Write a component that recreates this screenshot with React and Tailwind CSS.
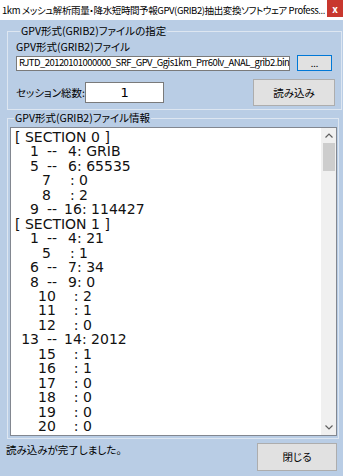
import React from "react";

const rows = [
  { k: "h", v: "[ SECTION 0 ]" },
  { k: "r", a: "1", b: "4", v: "GRIB" },
  { k: "r", a: "5", b: "6", v: "65535" },
  { k: "s", a: "7", v: "0" },
  { k: "s", a: "8", v: "2" },
  { k: "r", a: "9", b: "16", v: "114427" },
  { k: "h", v: "[ SECTION 1 ]" },
  { k: "r", a: "1", b: "4", v: "21" },
  { k: "s", a: "5", v: "1" },
  { k: "r", a: "6", b: "7", v: "34" },
  { k: "r", a: "8", b: "9", v: "0" },
  { k: "s", a: "10", v: "2" },
  { k: "s", a: "11", v: "1" },
  { k: "s", a: "12", v: "0" },
  { k: "r", a: "13", b: "14", v: "2012" },
  { k: "s", a: "15", v: "1" },
  { k: "s", a: "16", v: "1" },
  { k: "s", a: "17", v: "0" },
  { k: "s", a: "18", v: "0" },
  { k: "s", a: "19", v: "0" },
  { k: "s", a: "20", v: "0" },
];

const jp = "font-['Noto_Sans_CJK_JP',sans-serif] [font-feature-settings:'palt']";

const Row = ({ row }) => {
  if (row.k === "h") return <div>{row.v}</div>;
  if (row.k === "r") {
    return (
      <div className="flex">
        <span className="w-[24px] text-right">{row.a}</span>
        <span className="ml-[8px]">--</span>
        <span className={row.b.length === 1 ? "ml-[11px]" : "ml-[7px]"}>
          {row.b}: {row.v}
        </span>
      </div>
    );
  }
  return (
    <div className={`flex ${row.a.length === 1 ? "pl-[27px]" : "pl-[23px]"}`}>
      <span>{row.a}</span>
      <span className={row.a.length === 1 ? "ml-[19px]" : "ml-[18px]"}>: {row.v}</span>
    </div>
  );
};

const Chevron = ({ down }) => (
  <svg width="8" height="5" viewBox="0 0 8 5" className="text-[#606060]">
    <path
      d={down ? "M0.5 0.5 L4 4 L7.5 0.5" : "M0.5 4.5 L4 1 L7.5 4.5"}
      fill="none"
      stroke="currentColor"
      strokeWidth="1.2"
    />
  </svg>
);

export default function App() {
  return (
    <div className={`w-[343px] h-[476px] bg-[#b9cde5] flex flex-col overflow-hidden text-black ${jp}`}>
      {/* title bar */}
      <div className="h-[20px] bg-white flex items-start justify-between">
        <div className="pl-[2px] pt-[3px] text-[9.5px] leading-[14px] tracking-[-0.4px] whitespace-nowrap overflow-hidden">
          1km メッシュ解析雨量・降水短時間予報GPV(GRIB2)抽出変換ソフトウェア Profess...
        </div>
        <div className="ml-auto w-[16px] h-[17px] shrink-0 bg-[#c8372e] flex items-center justify-center text-white text-[10px] font-bold leading-none">
          x
        </div>
      </div>

      <div className="ml-[7px] w-[332px] flex flex-col">
        <fieldset className="mt-[4px] border border-[#dde6f1] pl-[8px] pr-[6px] pb-[4px] h-[86px]">
          <legend className="ml-[4px] px-px text-[10.5px] leading-[14px]">
            GPV形式(GRIB2)ファイルの指定
          </legend>
          <div className="mt-[2px] text-[10.5px] leading-[14px]">GPV形式(GRIB2)ファイル</div>
          <div className="mt-px flex items-center">
            <div className="w-[274px] h-[15px] border border-[#7a7a7a] bg-white pl-[2px] flex items-center text-[9.5px] tracking-[-0.55px] leading-none whitespace-nowrap overflow-hidden">
              RJTD_20120101000000_SRF_GPV_Ggis1km_Prr60lv_ANAL_grib2.bin
            </div>
            <div className="ml-[7px] w-[35px] h-[16px] border border-[#0078d7] bg-[#e1e1e1] flex items-end justify-center text-[9px] leading-[12px]">
              ...
            </div>
          </div>
          <div className="mt-[8px] flex items-center">
            <div className="text-[10.5px] leading-[14px] whitespace-nowrap">セッション総数:</div>
            <div className="ml-auto mr-[89px] w-[79px] h-[21px] border border-[#7a7a7a] bg-white flex items-center justify-center font-['DejaVu_Sans',sans-serif] text-[13px]">
              1
            </div>
            <div className="w-[82px] h-[27px] border border-[#adadad] bg-[#e1e1e1] flex items-center justify-center text-[10.5px]">
              読み込み
            </div>
          </div>
        </fieldset>

        <fieldset className="mt-[1px] border border-[#dde6f1] pl-[2px] pr-px pb-[2px]">
          <legend className="ml-[4px] px-px text-[10.5px] leading-[14px]">
            GPV形式(GRIB2)ファイル情報
          </legend>
          <div className="mt-[2px] h-[309px] border border-[#828790] bg-white flex">
            <div className="flex-1 pl-[4px] pt-[2px] font-['DejaVu_Sans',sans-serif] text-[14px] leading-[14.45px] text-[#111]">
              {rows.map((r, i) => (
                <Row key={i} row={r} />
              ))}
            </div>
            <div className="w-[15px] bg-[#f0f0f0] flex flex-col items-center">
              <div className="h-[15px] flex items-center justify-center">
                <Chevron />
              </div>
              <div className="w-[12px] h-[28px] bg-[#cdcdcd]" />
              <div className="flex-1" />
              <div className="h-[15px] flex items-center justify-center">
                <Chevron down />
              </div>
            </div>
          </div>
        </fieldset>
      </div>

      <div className="flex items-start justify-between">
        <div className="ml-[6px] mt-[4px] text-[10.5px] leading-[14px]">読み込みが完了しました。</div>
        <div className="mt-[4px] mr-[6px] w-[80px] h-[28px] border border-[#adadad] bg-[#e1e1e1] flex items-center justify-center text-[10.5px]">
          閉じる
        </div>
      </div>
    </div>
  );
}
